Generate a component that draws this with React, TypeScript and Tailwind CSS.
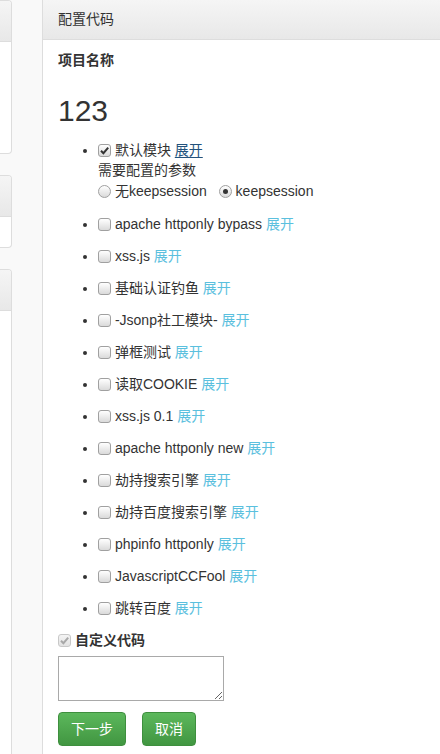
import React from "react";

const latin = "font-['Liberation_Sans','Noto_Sans_CJK_SC',Arial,sans-serif]";

const modules = [
  "apache httponly bypass",
  "xss.js",
  "基础认证钓鱼",
  "-Jsonp社工模块-",
  "弹框测试",
  "读取COOKIE",
  "xss.js 0.1",
  "apache httponly new",
  "劫持搜索引擎",
  "劫持百度搜索引擎",
  "phpinfo httponly",
  "JavascriptCCFool",
  "跳转百度",
];

const Check = ({ checked = false, disabled = false }: { checked?: boolean; disabled?: boolean }) => (
  <span
    className={
      "relative inline-block w-[13px] h-[13px] rounded-[3px] border align-[-2px] " +
      (disabled
        ? "border-[#c8c8c8] bg-gradient-to-b from-[#f4f4f4] to-[#e2e2e2]"
        : "border-[#a0a0a0] bg-gradient-to-b from-white to-[#dadada]")
    }
  >
    {checked && (
      <svg viewBox="0 0 13 13" className="absolute -left-px -top-px w-[13px] h-[13px]">
        <path
          d="M3 6.8 L5.4 9.2 L10.2 3.6"
          fill="none"
          stroke={disabled ? "#a8a8a8" : "#333"}
          strokeWidth="2"
        />
      </svg>
    )}
  </span>
);

const Radio = ({ checked = false }: { checked?: boolean }) => (
  <span className="relative inline-block w-[13px] h-[13px] rounded-full border border-[#a0a0a0] bg-gradient-to-b from-white to-[#dadada] align-[-2px]">
    {checked && <span className="absolute left-[3px] top-[3px] w-[5px] h-[5px] rounded-full bg-[#333]" />}
  </span>
);

const SidePanel = ({ body }: { body: string }) => (
  <div className="shrink-0 bg-white border border-l-0 border-[#dddddd] rounded-r-[4px] overflow-hidden">
    <div className="h-[41px] bg-gradient-to-b from-[#f5f5f5] to-[#e8e8e8] border-b border-[#dddddd]" />
    <div className={body} />
  </div>
);

export default function App() {
  return (
    <div className={`flex h-[754px] overflow-hidden bg-[#f9f9f9] text-[14px] text-[#333] ${latin}`}>
      {/* cut-off side column */}
      <div className="w-[12px] flex flex-col gap-[21px] shrink-0">
        <SidePanel body="h-[111px]" />
        <SidePanel body="h-[30px]" />
        <SidePanel body="h-[600px]" />
      </div>

      <div className="w-[30px] shrink-0" />

      {/* main panel */}
      <div className="flex-1 bg-white border-l border-[#dddddd]">
        <div className="h-[40px] px-[15px] flex items-center bg-gradient-to-b from-[#f5f5f5] to-[#e8e8e8] border-b border-[#dddddd]">
          配置代码
        </div>

        <div className="px-[15px] pt-[10px] leading-[20px]">
          <div className="font-bold">项目名称</div>
          <h2 className="mt-[24px] text-[30px] leading-[33px]">123</h2>

          <ul className="mt-[13px] pl-[40px] list-disc">
            <li className="mb-[12px]">
              <div>
                <Check checked /> 默认模块{" "}
                <a href="#" className="text-[#23527c] underline underline-offset-2">
                  展开
                </a>
              </div>
              <div>需要配置的参数</div>
              <div className="h-[22px] leading-[22px] whitespace-nowrap">
                <Radio /> 无keepsession
                <span className="inline-block w-[12px]" />
                <Radio checked /> keepsession
              </div>
            </li>
            {modules.map((m) => (
              <li key={m} className="mb-[12px]">
                <Check /> {m}{" "}
                <a href="#" className="text-[#5bc0de]">
                  展开
                </a>
              </li>
            ))}
          </ul>

          <div className="mt-[11px] font-bold">
            <Check checked disabled /> 自定义代码
          </div>

          <textarea className="block mt-[6px] w-[166px] h-[45px] border border-[#a9a9a9] resize" />

          <div className="mt-[11px] flex gap-[16px]">
            <button className="h-[34px] px-[12px] rounded-[4px] border border-[#3e8f3e] bg-gradient-to-b from-[#5cb85c] to-[#419641] text-white">
              下一步
            </button>
            <button className="h-[34px] px-[12px] rounded-[4px] border border-[#3e8f3e] bg-gradient-to-b from-[#5cb85c] to-[#419641] text-white">
              取消
            </button>
          </div>
        </div>
      </div>
    </div>
  );
}
